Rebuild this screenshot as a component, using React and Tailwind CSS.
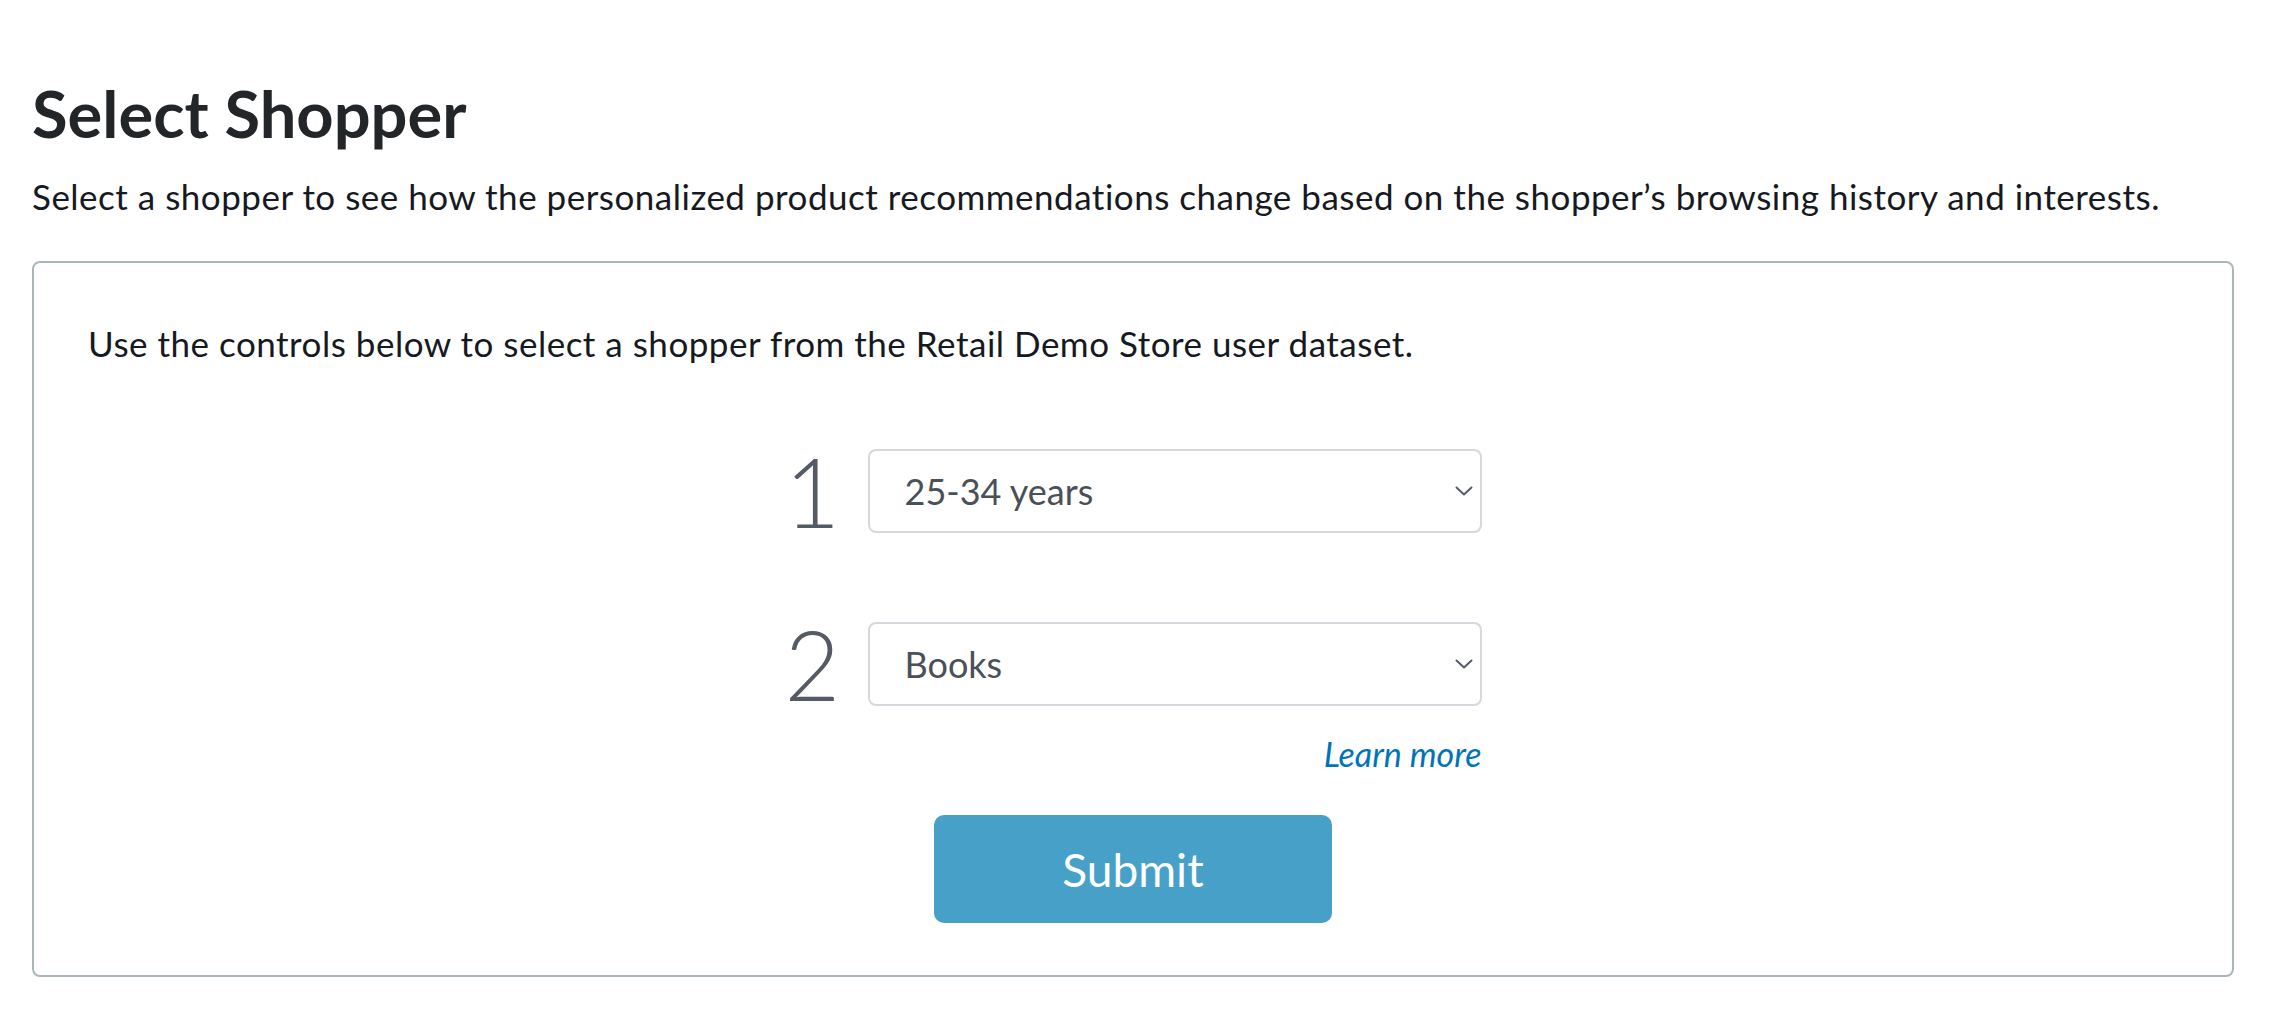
import React from "react";

function Chevron() {
  return (
    <svg width="18" height="10" viewBox="0 0 18 10" fill="none" className="shrink-0">
      <path d="M1.5 1.5 L9 8.5 L16.5 1.5" stroke="#545b64" strokeWidth="2" strokeLinecap="round" strokeLinejoin="round" />
    </svg>
  );
}

function SelectRow({ num, value }) {
  return (
    <div className="flex items-center h-[84px]">
      <div className="w-[83px] text-[96px] leading-none font-light text-[#545b64]">{num}</div>
      <div className="w-[614px] h-[84px] rounded-[8px] border-2 border-[#d5d9dd] bg-white flex items-center justify-between pl-[35px] pr-[7px]">
        <span className="text-[36px] text-[#4a5058]">{value}</span>
        <Chevron />
      </div>
    </div>
  );
}

export default function App() {
  return (
    <div className="min-h-[1028px] bg-white px-[32px] pt-[74px] text-[#16191f]" style={{ fontFamily: "Lato, 'Open Sans', sans-serif" }}>
      <h2 className="text-[65px] leading-[1.2] font-bold text-[#232629]">Select Shopper</h2>
      <p className="mt-[20px] text-[35px] leading-[48px] tracking-[0.5px]">
        Select a shopper to see how the personalized product recommendations change based on the shopper’s browsing history and interests.
      </p>
      <div className="mt-[41px] w-[2202px] border-2 border-[#aab7b8] rounded-[8px] pt-[56px] pb-[52px] px-[54px]">
        <p className="text-[35px] leading-[48px] tracking-[0.5px]">Use the controls below to select a shopper from the Retail Demo Store user dataset.</p>
        <div className="mt-[82px] flex flex-col items-center">
          <div className="flex flex-col">
            <SelectRow num="1" value="25-34 years" />
            <div className="mt-[89px]">
              <SelectRow num="2" value="Books" />
            </div>
            <div className="mt-[24px] text-right text-[34px] leading-[48px] italic text-[#0073bb]">Learn more</div>
          </div>
          <button className="mt-[37px] w-[398px] h-[108px] rounded-[10px] bg-[#47a0c8] text-white text-[46px]">Submit</button>
        </div>
      </div>
    </div>
  );
}
